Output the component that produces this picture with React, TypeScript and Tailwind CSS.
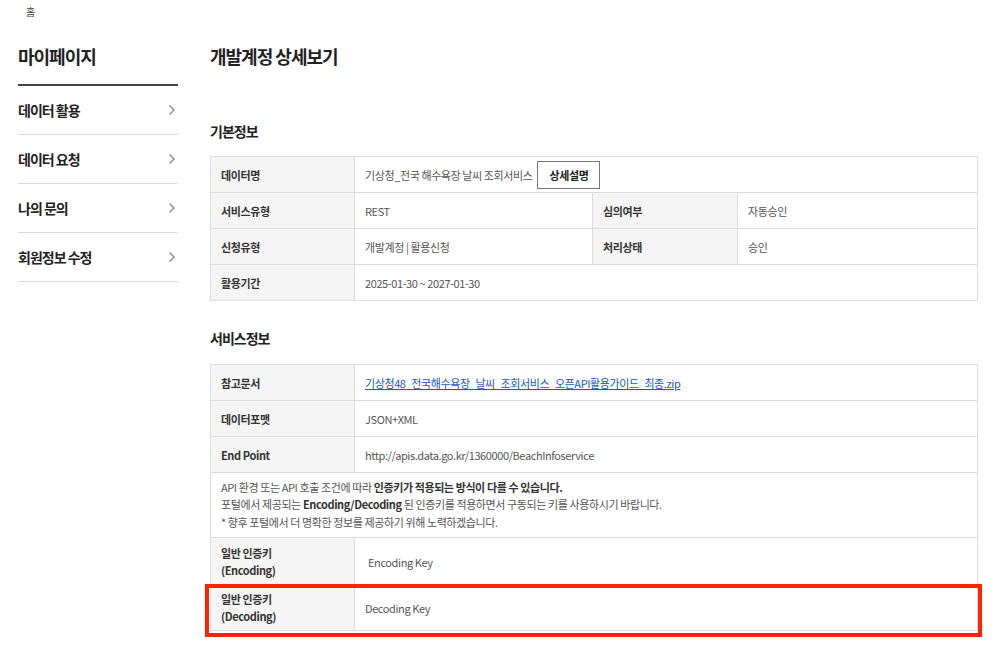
import React from "react";

const Chevron = () => (
  <svg width="8" height="12" viewBox="0 0 8 12" fill="none">
    <path d="M1.5 1.5 L6 6 L1.5 10.5" stroke="#8a8a8a" strokeWidth="1.4" />
  </svg>
);

const menu = ["데이터 활용", "데이터 요청", "나의 문의", "회원정보 수정"];

const th = "bg-[#f5f5f5] border border-[#dddddd] px-[10px] text-left font-bold text-[#333] align-middle";
const td = "border border-[#dddddd] px-[10px] text-[#555] font-normal align-middle";

export default function App() {
  return (
    <div className="relative w-[1002px] h-[654px] overflow-hidden bg-white font-['Noto_Sans_CJK_KR','Noto_Sans',sans-serif] text-[#222]">
      <div className="pl-[26px] pt-[5px] h-[22px] text-[10px] leading-[14px] text-[#444]">홈</div>
      <div className="flex">
        <aside className="ml-[18px] w-[160px]">
          <div className="h-[62px] pt-[22px] text-[18px] leading-[24px] font-bold tracking-[-1px] text-[#222]">마이페이지</div>
          <div className="h-[2px] bg-[#444]" />
          {menu.map((m) => (
            <div key={m} className="h-[49px] border-b border-[#dddddd] flex items-center justify-between pr-[2px]">
              <span className="text-[14px] font-bold text-[#222] tracking-[-1px]">{m}</span>
              <Chevron />
            </div>
          ))}
        </aside>
        <main className="ml-[32px] w-[768px]">
          <div className="h-[62px] pt-[22px] text-[18px] leading-[24px] font-bold tracking-[-1px] text-[#222]">개발계정 상세보기</div>
          <h2 className="mt-[37px] mb-[15px] text-[14px] leading-[20px] font-bold tracking-[-1px] text-[#222]">기본정보</h2>
          <table className="w-full border-collapse text-[11px] leading-[16px] tracking-[-0.4px] table-fixed">
            <colgroup>
              <col className="w-[144px]" />
              <col className="w-[238px]" />
              <col className="w-[145px]" />
              <col />
            </colgroup>
            <tbody>
              <tr className="h-[36px]">
                <th className={th}>데이터명</th>
                <td className={td} colSpan={3}>
                  <div className="flex items-center gap-[5px]">
                    <span>기상청_전국 해수욕장 날씨 조회서비스</span>
                    <span className="h-[28px] w-[63px] border border-[#777] flex items-center justify-center font-bold text-[#222]">상세설명</span>
                  </div>
                </td>
              </tr>
              <tr className="h-[36px]">
                <th className={th}>서비스유형</th>
                <td className={td}>REST</td>
                <th className={th}>심의여부</th>
                <td className={td}>자동승인</td>
              </tr>
              <tr className="h-[36px]">
                <th className={th}>신청유형</th>
                <td className={td}>개발계정 | 활용신청</td>
                <th className={th}>처리상태</th>
                <td className={td}>승인</td>
              </tr>
              <tr className="h-[36px]">
                <th className={th}>활용기간</th>
                <td className={td} colSpan={3}>2025-01-30 ~ 2027-01-30</td>
              </tr>
            </tbody>
          </table>
          <h2 className="mt-[27px] mb-[16px] text-[14px] leading-[20px] font-bold tracking-[-1px] text-[#222]">서비스정보</h2>
          <table className="w-full border-collapse text-[11px] leading-[16px] tracking-[-0.4px] table-fixed">
            <colgroup>
              <col className="w-[144px]" />
              <col />
            </colgroup>
            <tbody>
              <tr className="h-[36px]">
                <th className={th}>참고문서</th>
                <td className={td}>
                  <span className="text-[#1a56c8] underline">기상청48_전국해수욕장_날씨_조회서비스_오픈API활용가이드_최종.zip</span>
                </td>
              </tr>
              <tr className="h-[36px]">
                <th className={th}>데이터포맷</th>
                <td className={td}>JSON+XML</td>
              </tr>
              <tr className="h-[36px]">
                <th className={th}>End Point</th>
                <td className={td}>http://apis.data.go.kr/1360000/BeachInfoservice</td>
              </tr>
              <tr className="h-[65px]">
                <td className={td + " leading-[17.5px]"} colSpan={2}>
                  <div>API 환경 또는 API 호출 조건에 따라 <b className="text-[#333]">인증키가 적용되는 방식이 다를 수 있습니다.</b></div>
                  <div>포털에서 제공되는 <b className="text-[#333]">Encoding/Decoding</b> 된 인증키를 적용하면서 구동되는 키를 사용하시기 바랍니다.</div>
                  <div>* 향후 포털에서 더 명확한 정보를 제공하기 위해 노력하겠습니다.</div>
                </td>
              </tr>
              <tr className="h-[48px]">
                <th className={th + " leading-[17px]"}>일반 인증키<br />(Encoding)</th>
                <td className={td + " pl-[13px]"}>Encoding Key</td>
              </tr>
              <tr className="h-[45px]">
                <th className={th + " leading-[17px]"}>일반 인증키<br />(Decoding)</th>
                <td className={td}>Decoding Key</td>
              </tr>
            </tbody>
          </table>
        </main>
      </div>
      <div className="absolute left-[205px] top-[584px] w-[777px] h-[53px] border-4 border-[#ff2205]" />
    </div>
  );
}
